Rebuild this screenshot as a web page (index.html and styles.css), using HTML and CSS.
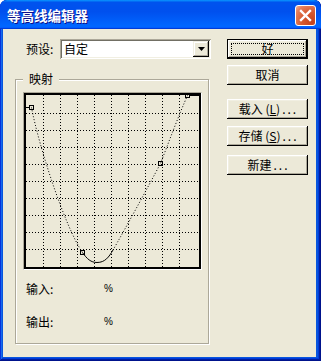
FILE: index.html
```html
<!DOCTYPE html>
<html lang="zh-CN">
<head>
<meta charset="utf-8">
<title>等高线编辑器</title>
<link rel="stylesheet" href="styles.css">
</head>
<body>
<div class="window">
  <div class="titlebar">
    <span class="title">等高线编辑器</span>
    <span class="close">
      <svg width="21" height="21" viewBox="0 0 21 21"><path d="M6 6 L15 15 M15 6 L6 15" stroke="#fff" stroke-width="2.4" stroke-linecap="square"/></svg>
    </span>
  </div>
  <div class="client">
    <div class="left">
      <div class="preset">
        <span class="lbl">预设:</span>
        <div class="select">
          <span class="val">自定</span>
          <span class="drop"><svg width="7" height="4" viewBox="0 0 7 4"><path d="M0 0H7L3.5 4Z" fill="#000"/></svg></span>
        </div>
      </div>
      <fieldset class="group">
        <legend>映射</legend>
        <div class="graph">
          <svg width="177" height="176" viewBox="0 0 177 176" shape-rendering="crispEdges">
            <g stroke="#000" stroke-width="1" stroke-dasharray="1 2" fill="none">
              <path d="M19.5 2V174M36.5 2V174M53.5 2V174M70.5 2V174M87.5 2V174M104.5 2V174M121.5 2V174M138.5 2V174M155.5 2V174"/>
              <path d="M2 20.5H175M2 37.5H175M2 54.5H175M2 71.5H175M2 88.5H175M2 105.5H175M2 122.5H175M2 139.5H175M2 156.5H175"/>
            </g>
            <rect x="1" y="1" width="175" height="174" fill="none" stroke="#000" stroke-width="2"/>
            <g fill="none" stroke="#000" stroke-width="1" shape-rendering="auto">
              <path d="M7.5 14.5C15 54 41 134 58.5 159.5M89 157C99 140 124 94 136.5 70.5C144 51 156 19 163.5 2.5" stroke-dasharray="1 2"/>
              <path d="M58.5 159.5C63 166 67 169.5 73 169.5C81 169.5 85 164 89 157"/>
            </g>
            <g fill="none" stroke="#000" stroke-width="1">
              <path d="M2 14.5H5.5M165.5 2.5H175"/>
              <rect x="5.5" y="12.5" width="4" height="4"/>
              <rect x="56.5" y="157.5" width="4" height="4"/>
              <rect x="134.5" y="68.5" width="4" height="4"/>
              <rect x="161.5" y="0.5" width="4" height="4"/>
            </g>
          </svg>
        </div>
        <div class="io"><span class="io-lbl">输入:</span><span class="pct">%</span></div>
        <div class="io io2"><span class="io-lbl">输出:</span><span class="pct">%</span></div>
      </fieldset>
    </div>
    <div class="buttons">
      <button class="btn default"><span class="focus">好</span></button>
      <button class="btn b-cancel">取消</button>
      <button class="btn b-load">载入 (<u>L</u>)<span class="dots">...</span></button>
      <button class="btn b-save">存储 (<u>S</u>)<span class="dots">...</span></button>
      <button class="btn b-new">新建<span class="dots">...</span></button>
    </div>
  </div>
</div>
</body>
</html>
```

FILE: styles.css
```css
html, body {
  margin: 0;
  padding: 0;
  background: #ffffff;
}

body {
  font-family: "Noto Sans CJK SC", "Liberation Sans", sans-serif;
  font-size: 12px;
  color: #000;
}

.window {
  width: 321px;
  height: 361px;
  box-sizing: border-box;
  border-radius: 7px 7px 0 0;
  overflow: hidden;
  background: #0855DD;
  box-shadow: inset -1px -1px #00138c, inset 1px 1px #0831d9, inset -2px -2px #001ea0, inset 2px 2px #166aee, inset -3px -3px #003bda, inset 3px 3px #0855dd;
  padding: 0 5px 4px 3px;
  display: flex;
  flex-direction: column;
}

.titlebar {
  height: 29px;
  margin: 0 -5px 0 -3px;
  padding: 0 5px 0 7px;
  display: flex;
  align-items: center;
  background: linear-gradient(180deg, #0997ff, #0053ee 8%, #0050ee 40%, #0066ff 88%, #0066ff 93%, #005bff 95%, #003dd7 96%, #003dd7);
  border-radius: 7px 7px 0 0;
  flex: none;
}

.title {
  color: #fff;
  font-weight: bold;
  font-size: 13.5px;
  line-height: 16px;
  text-shadow: 1px 1px #0f1089;
  padding-top: 1px;
}

.close {
  margin-left: auto;
  width: 21px;
  height: 21px;
  box-sizing: border-box;
  border: 1px solid #fff;
  border-radius: 3px;
  background: radial-gradient(circle at 85% 85%, #c5421c 0%, #d65a30 45%, #e6805d 80%, #f2b29a 100%);
  display: flex;
  align-items: center;
  justify-content: center;
  margin-top: 1px;
}

.close svg {
  display: block;
  margin: -1px;
}

.client {
  flex: 1;
  background: #ECE9D8;
  display: flex;
  gap: 16px;
  padding: 10px 8px 0 12px;
}

.left {
  width: 196px;
  flex: none;
}

.preset {
  display: flex;
  align-items: center;
  height: 20px;
}

.lbl {
  width: 34px;
  margin-left: 11px;
  line-height: 14px;
}

.select {
  width: 151px;
  height: 20px;
  box-sizing: border-box;
  background: #fff;
  box-shadow: inset 1px 1px #aca899, inset -1px -1px #fff, inset 2px 2px #716f64, inset -2px -2px #f1efe2;
  padding: 2px;
  display: flex;
  align-items: center;
}

.val {
  margin-left: 2px;
  line-height: 14px;
}

.drop {
  margin-left: auto;
  width: 16px;
  height: 16px;
  box-sizing: border-box;
  background: #ECE9D8;
  box-shadow: inset -1px -1px #000, inset 1px 1px #f1efe2, inset -2px -2px #aca899, inset 2px 2px #fff;
  display: flex;
  align-items: center;
  justify-content: center;
}

.drop svg {
  display: block;
}

.group {
  width: 194px;
  box-sizing: border-box;
  margin: 13px 0 0 0;
  padding: 6px 6px 13px 7px;
  border: 1px solid #aca899;
  box-shadow: 1px 1px 0 #fff, inset 1px 1px 0 #fff;
}

.group legend {
  padding: 0 6px;
  margin-left: 0;
  line-height: 14px;
  background: #ECE9D8;
}

.graph {
  width: 179px;
  height: 178px;
  box-sizing: border-box;
  border-style: solid;
  border-width: 1px;
  border-color: #aca899 #fff #fff #aca899;
}

.graph svg {
  display: block;
}

.io {
  display: flex;
  height: 16px;
  align-items: center;
  margin-top: 11px;
  padding-left: 3px;
  line-height: 14px;
}

.io2 {
  margin-top: 17px;
}

.io-lbl {
  width: 78px;
}

.pct {
  font-family: "Liberation Sans", sans-serif;
  font-size: 10px;
}

.buttons {
  width: 81px;
  flex: none;
  display: flex;
  flex-direction: column;
}

.btn {
  width: 81px;
  height: 20px;
  box-sizing: border-box;
  border: none;
  padding: 0;
  margin: 0;
  background: #ECE9D8;
  font-family: "Noto Sans CJK SC", "Liberation Sans", sans-serif;
  font-size: 12px;
  line-height: 14px;
  color: #000;
  white-space: pre;
  box-shadow: inset -1px -1px #000, inset 1px 1px #fff, inset -2px -2px #aca899, inset 2px 2px #f1efe2;
  display: flex;
  align-items: center;
  justify-content: center;
}

.dots {
  letter-spacing: 2px;
  margin-left: 2px;
  margin-right: -2px;
}

.btn.default {
  border: 1px solid #000;
  padding: 3px;
}

.focus {
  flex: 1;
  align-self: stretch;
  border: 1px dotted #000;
  display: flex;
  align-items: center;
  justify-content: center;
  margin: 0;
}

.b-cancel { margin-top: 6px; }
.b-load { margin-top: 14px; }
.b-save { margin-top: 7px; }
.b-new { margin-top: 9px; }
```
